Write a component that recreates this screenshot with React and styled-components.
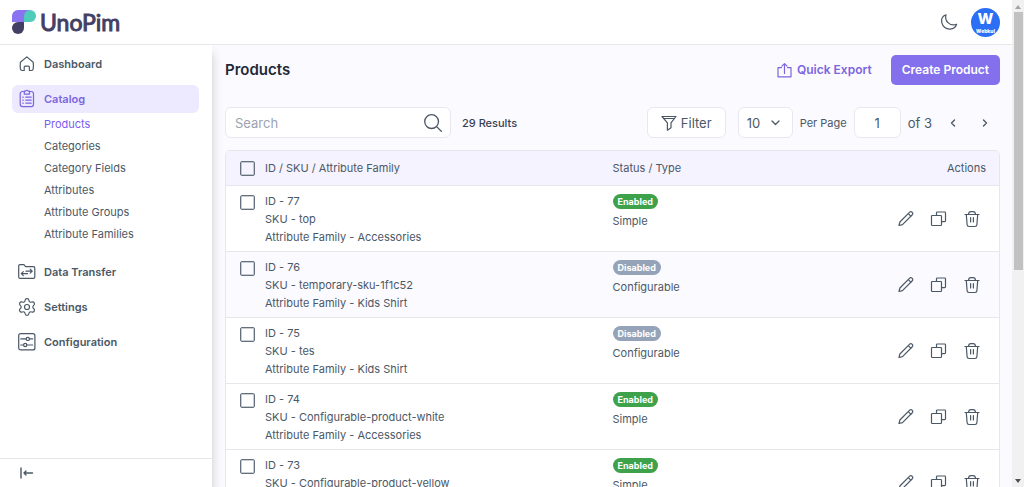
import React from 'react';
import styled, { createGlobalStyle } from 'styled-components';
import { Settings } from 'lucide-react';

const GlobalStyle = createGlobalStyle`
  * {
    box-sizing: border-box;
  }

  body {
    margin: 0;
    color: #4b5866;
    font-family: Inter, 'Liberation Sans', sans-serif;
    font-size: 11px;
    line-height: 18px;
  }

  button, input, select {
    font: inherit;
    color: inherit;
    margin: 0;
  }

  a {
    color: inherit;
    text-decoration: none;
  }

  svg {
    display: block;
    flex: none;
    overflow: visible;
  }
`;

const Shell = styled.div`
  display: flex;
  height: 100vh;
  overflow: hidden;
`;

const Page = styled.div`
  flex: 1;
  min-width: 0;
  display: flex;
  flex-direction: column;
`;

const Header = styled.header`
  flex: none;
  display: flex;
  align-items: center;
  justify-content: space-between;
  height: 45px;
  padding: 0 12px;
  background: #fff;
  border-bottom: 1px solid #e5e7eb;
`;

const Brand = styled.a`
  display: flex;
  align-items: center;
  gap: 4px;
  color: #433f64;
  font-family: Lato, sans-serif;
  font-size: 23px;
  line-height: 30px;
  -webkit-text-stroke: 1px #433f64;
`;

const HeaderTools = styled.div`
  display: flex;
  align-items: center;
  gap: 13px;
`;

const IconButton = styled.button`
  display: flex;
  align-items: center;
  justify-content: center;
  width: 18px;
  height: 18px;
  padding: 0;
  border: 0;
  background: none;
  color: #4b5866;
  cursor: pointer;
`;

const Avatar = styled.button`
  display: flex;
  flex-direction: column;
  align-items: center;
  justify-content: center;
  width: 29px;
  height: 29px;
  padding: 0;
  border: 0;
  border-radius: 50%;
  background: #2b6ff5;
  color: #fff;
  font-weight: 800;
  font-size: 15px;
  line-height: 18px;
  cursor: pointer;

  small {
    font-size: 5px;
    line-height: 6px;
  }
`;

const Body = styled.div`
  flex: 1;
  min-height: 0;
  display: flex;
  background: #fbfaff;
`;

const Sidebar = styled.aside`
  flex: none;
  display: flex;
  flex-direction: column;
  justify-content: space-between;
  width: 212px;
  background: #fff;
  box-shadow: 0 8px 10px rgba(0, 0, 0, 0.2);
  clip-path: inset(0 -12px 0 0);
`;

const Nav = styled.nav`
  display: flex;
  flex-direction: column;
  gap: 7px;
  padding: 5px 13px 0 12px;
`;

const NavItem = styled.a`
  display: flex;
  align-items: center;
  gap: 8px;
  height: 28px;
  padding: 0 6px;
  border-radius: 6px;
  font-weight: 600;
  color: ${({ $active }) => ($active ? '#7c66e0' : '#4b5866')};
  background: ${({ $active }) => ($active ? '#ede9fe' : 'transparent')};
`;

const GearIcon = styled(Settings)`
  margin: 0 -1px;
`;

const SubMenu = styled.div`
  display: flex;
  flex-direction: column;
  margin-top: -7px;
  padding: 0 0 6px 32px;
`;

const SubItem = styled.a`
  line-height: 22px;
  color: ${({ $active }) => ($active ? '#7c5cf0' : '#4b5866')};
`;

const Collapse = styled.div`
  display: flex;
  align-items: center;
  height: 29px;
  padding-left: 18px;
  border-top: 1px solid #e5e7eb;
`;

const Main = styled.main`
  flex: 1;
  min-width: 0;
  overflow: hidden;
  padding: 10px 12px 0 13px;
`;

const Row = styled.div`
  display: flex;
  align-items: center;
  gap: ${({ $gap }) => $gap}px;
`;

const TitleBar = styled(Row)`
  justify-content: space-between;
`;

const Title = styled.h1`
  margin: 0;
  color: #1f2937;
  font-size: 15px;
  font-weight: 600;
  line-height: 24px;
`;

const Button = styled.button`
  display: flex;
  align-items: center;
  gap: 5px;
  height: 30px;
  padding: 0 11px;
  border: 0;
  border-radius: 5px;
  font-size: 12px;
  font-weight: 600;
  white-space: nowrap;
  cursor: pointer;
  color: ${({ $primary }) => ($primary ? '#fff' : '#7c66e0')};
  background: ${({ $primary }) => ($primary ? '#8470ec' : 'transparent')};
`;

const Toolbar = styled(TitleBar)`
  margin: 22px 0 12px;
  padding-right: 6px;
`;

const field = `
  height: 31px;
  border: 1px solid #e9e8f0;
  border-radius: 6px;
  background: #fff;
  font-size: 13px;
`;

const SearchBox = styled.label`
  ${field}
  display: flex;
  align-items: center;
  width: 226px;
  padding: 0 8px 0 9px;

  input {
    flex: 1;
    min-width: 0;
    padding: 0;
    border: 0;
    outline: 0;
    background: none;
  }

  input::placeholder {
    color: #9ca3af;
    opacity: 1;
  }
`;

const Results = styled.p`
  margin: 0;
  font-weight: 500;
  color: #374151;
`;

const FilterButton = styled.button`
  ${field}
  display: flex;
  align-items: center;
  justify-content: center;
  gap: 4px;
  width: 79px;
  padding: 0;
  cursor: pointer;
`;

const SelectBox = styled.div`
  ${field}
  display: grid;
  align-items: center;
  width: 55px;

  select, svg {
    grid-area: 1 / 1;
  }

  select {
    appearance: none;
    width: 100%;
    height: 100%;
    padding: 0 8px;
    border: 0;
    background: none;
  }

  svg {
    justify-self: end;
    margin-right: 12px;
    pointer-events: none;
  }
`;

const PageInput = styled.input`
  ${field}
  width: 47px;
  padding: 0;
  text-align: center;
`;

const PageTotal = styled.span`
  font-size: 13px;
`;

const Table = styled.table`
  width: 100%;
  table-layout: fixed;
  border: 1px solid #e5e7eb;
  border-radius: 5px;
  border-spacing: 0;
  overflow: hidden;
  background: #fff;

  th, td {
    padding: 0;
    font-weight: 400;
    text-align: left;
    vertical-align: top;
    border-bottom: 1px solid #e5e7eb;
  }

  th {
    height: 35px;
    vertical-align: middle;
    background: #f5f3ff;
  }

  td {
    height: 66px;
    padding-top: 6px;
  }

  th:first-child, td:first-child {
    width: 50%;
    padding-left: 14px;
  }

  th:last-child {
    padding-right: 13px;
    text-align: right;
  }

  td:last-child {
    padding: 0 18px 0 0;
    vertical-align: middle;
  }
`;

const BodyRow = styled.tr`
  background: ${({ $highlight }) => ($highlight ? '#fbfaff' : '#fff')};
`;

const Entry = styled.label`
  display: flex;
  align-items: ${({ $center }) => ($center ? 'center' : 'flex-start')};
  gap: 10px;
`;

const Checkbox = styled.input.attrs({ type: 'checkbox' })`
  appearance: none;
  flex: none;
  width: 15px;
  height: 15px;
  border: 1px solid #64707e;
  border-radius: 2px;
  box-shadow: inset 0 0 0 1px rgba(100, 112, 126, 0.35);

  td & {
    margin-top: 3px;
  }

  &:checked {
    background: #8470ec;
  }
`;

const Lines = styled.span`
  display: flex;
  flex-direction: column;
  white-space: nowrap;
`;

const Badge = styled.span`
  display: block;
  width: fit-content;
  margin: 2px 0 3px;
  padding: 0 5px;
  border-radius: 8px;
  color: #fff;
  font-size: 9px;
  font-weight: 700;
  line-height: 15px;
  background: ${({ $enabled }) => ($enabled ? '#3ea24b' : '#94a3b8')};
`;

const Actions = styled.div`
  display: flex;
  justify-content: flex-end;
  gap: 15px;
`;

const Scrollbar = styled.div`
  flex: none;
  display: flex;
  flex-direction: column;
  justify-content: space-between;
  align-items: center;
  width: 12px;
  padding: 5px 0 4px;
  background: #f1f1f1;
`;

const Thumb = styled.div`
  width: 9px;
  height: 54%;
  margin: 3px 0 auto;
  background: #c1c1c1;
`;

const Icon = ({ size = 18, stroke = 1.2, children, ...rest }) => (
  <svg
    width={size}
    height={size}
    viewBox={`0 0 ${size} ${size}`}
    fill="none"
    stroke="currentColor"
    strokeWidth={stroke}
    strokeLinecap="round"
    strokeLinejoin="round"
    aria-hidden="true"
    {...rest}
  >
    {children}
  </svg>
);

const Logo = () => (
  <svg width="24" height="24" viewBox="0 0 24 24" aria-hidden="true">
    <path d="M0 12V6a6 6 0 0 1 6-6h12l-6 12z" fill="#8b72f0" />
    <path d="M12 12V6a6 6 0 1 1 6 6z" fill="#4ecbb9" />
    <path d="M12 12v6a6 6 0 1 1-6-6z" fill="#433f64" />
  </svg>
);

const HomeIcon = () => (
  <Icon>
    <path d="M2.4 7.3 8.8 1.9l6.4 5.4c.3 2.2.3 4.4 0 6.6a1.9 1.9 0 0 1-1.8 1.6h-2v-3.3a1 1 0 0 0-1-1H7.2a1 1 0 0 0-1 1v3.3h-2a1.9 1.9 0 0 1-1.8-1.6c-.3-2.2-.3-4.4 0-6.6z" />
  </Icon>
);

const CatalogIcon = () => (
  <Icon>
    <path d="M6.3 1.5H4.5a2.3 2.3 0 0 0-2.3 2.3v10.5a2.3 2.3 0 0 0 2.3 2.3h8.7a2.3 2.3 0 0 0 2.3-2.3V3.8a2.3 2.3 0 0 0-2.3-2.3h-1.8" />
    <path d="M6.3 1.2h1.3a1.3 1.3 0 0 1 2.5 0h1.4v2.9H6.3z" />
    <path d="M4.8 7.2h.5M7.8 7.2h5.4M4.8 10.2h.5M7.8 10.2h5.4M4.8 13.2h.5M7.8 13.2h5.4" />
  </Icon>
);

const TransferIcon = () => (
  <Icon>
    <path d="M.7 14V2.9a1.2 1.2 0 0 1 1.2-1.2h4l1.7 1.9h7.9a1.3 1.3 0 0 1 1.3 1.3V14a1.4 1.4 0 0 1-1.4 1.4H2.1A1.4 1.4 0 0 1 .7 14z" />
    <path d="M8 8.2h6.2M12.2 6.2l2 2-2 2M9.6 10.6H3.3M5.3 8.6l-2 2 2 2" />
  </Icon>
);

const ConfigIcon = () => (
  <Icon>
    <rect x=".7" y=".7" width="16.2" height="16.2" rx="2" />
    <path d="M2.8 5.9H8M11.6 5.9h3.1M2.8 12h2.6M9 12h5.7" />
    <circle cx="9.8" cy="5.9" r="1.6" />
    <circle cx="7.2" cy="12" r="1.6" />
  </Icon>
);

const ExportIcon = () => (
  <Icon size={15}>
    <path d="M4.5 4.6H1v9.2h13V4.6h-3.5M7.5 10.5V.8M4.9 3.2 7.5.6l2.6 2.6" />
  </Icon>
);

const EditIcon = () => (
  <Icon>
    <path d="M2 15.5l.9-3.5L12.7 2.2a1.6 1.6 0 0 1 2.3 0l.3.3a1.6 1.6 0 0 1 0 2.3L5.5 14.6zM11.3 3.6l2.7 2.7" />
  </Icon>
);

const CopyIcon = () => (
  <Icon>
    <rect x="1.5" y="5.5" width="10" height="10" rx=".8" />
    <path d="M6.5 5.5V2.8a.8.8 0 0 1 .8-.8h7.4a.8.8 0 0 1 .8.8v8a.8.8 0 0 1-.8.8h-3.2" />
  </Icon>
);

const TrashIcon = () => (
  <Icon>
    <path d="M2 4.5h14M3.3 4.5l.8 10.3A1.9 1.9 0 0 0 6 16.5h6a1.9 1.9 0 0 0 1.9-1.7l.8-10.3M5.5 4.5c.1-1.9.8-2.9 2.4-2.9h2.2c1.6 0 2.3 1 2.4 2.9M7.6 7.5V12M10.4 7.5V12" />
  </Icon>
);

const products = [
  { id: 77, sku: 'top', family: 'Accessories', enabled: true, type: 'Simple' },
  { id: 76, sku: 'temporary-sku-1f1c52', family: 'Kids Shirt', enabled: false, type: 'Configurable', highlight: true },
  { id: 75, sku: 'tes', family: 'Kids Shirt', enabled: false, type: 'Configurable' },
  { id: 74, sku: 'Configurable-product-white', family: 'Accessories', enabled: true, type: 'Simple' },
  { id: 73, sku: 'Configurable-product-yellow', family: 'Accessories', enabled: true, type: 'Simple' },
];

const catalogLinks = ['Products', 'Categories', 'Category Fields', 'Attributes', 'Attribute Groups', 'Attribute Families'];

const ProductRow = ({ product }) => (
  <BodyRow $highlight={product.highlight}>
    <td>
      <Entry>
        <Checkbox />
        <Lines>
          <span>ID - {product.id}</span>
          <span>SKU - {product.sku}</span>
          <span>Attribute Family - {product.family}</span>
        </Lines>
      </Entry>
    </td>
    <td>
      <Badge $enabled={product.enabled}>{product.enabled ? 'Enabled' : 'Disabled'}</Badge>
      {product.type}
    </td>
    <td>
      <Actions>
        <IconButton aria-label="Edit"><EditIcon /></IconButton>
        <IconButton aria-label="Copy"><CopyIcon /></IconButton>
        <IconButton aria-label="Delete"><TrashIcon /></IconButton>
      </Actions>
    </td>
  </BodyRow>
);

const App = () => (
  <Shell>
    <GlobalStyle />
    <Page>
      <Header>
        <Brand href="#"><Logo />UnoPim</Brand>
        <HeaderTools>
          <IconButton aria-label="Dark mode">
            <Icon>
              <path d="M6 1.8C2.8 3 1 6 1.8 9.7c.8 4 4.4 6.7 8.4 6.4 3-.2 5.5-2.2 6.4-4.9-2.8 1.2-6 .8-8.3-1.3C6 7.8 5.1 4.8 6 1.8z" />
            </Icon>
          </IconButton>
          <Avatar>W<small>Webkul</small></Avatar>
        </HeaderTools>
      </Header>
      <Body>
        <Sidebar>
          <Nav>
            <NavItem href="#"><HomeIcon />Dashboard</NavItem>
            <NavItem href="#" $active><CatalogIcon />Catalog</NavItem>
            <SubMenu>
              {catalogLinks.map((name, i) => (
                <SubItem key={name} href="#" $active={i === 0}>{name}</SubItem>
              ))}
            </SubMenu>
            <NavItem href="#"><TransferIcon />Data Transfer</NavItem>
            <NavItem href="#"><GearIcon size={20} strokeWidth={1.4} />Settings</NavItem>
            <NavItem href="#"><ConfigIcon />Configuration</NavItem>
          </Nav>
          <Collapse>
            <IconButton aria-label="Collapse sidebar">
              <Icon stroke={1.4}>
                <path d="M3 4v10M14.5 9H6M8 7 6 9l2 2" />
              </Icon>
            </IconButton>
          </Collapse>
        </Sidebar>
        <Main>
          <TitleBar>
            <Title>Products</Title>
            <Row $gap={8}>
              <Button><ExportIcon />Quick Export</Button>
              <Button $primary>Create Product</Button>
            </Row>
          </TitleBar>
          <Toolbar>
            <Row $gap={11}>
              <SearchBox>
                <input type="text" placeholder="Search" aria-label="Search" />
                <Icon stroke={1.3}>
                  <circle cx="7.6" cy="7.6" r="6.9" />
                  <path d="M12.6 12.6l4.7 4.7" />
                </Icon>
              </SearchBox>
              <Results>29 Results</Results>
            </Row>
            <Row $gap={12}>
              <FilterButton>
                <Icon size={16}>
                  <path d="M1 1.5h14l-5 6.3v5l-3.6 2.4V7.8zM2.5 3.5h11" />
                </Icon>
                Filter
              </FilterButton>
              <Row $gap={7}>
                <SelectBox>
                  <select id="per-page" defaultValue="10">
                    <option>10</option>
                    <option>20</option>
                    <option>50</option>
                  </select>
                  <Icon size={9} stroke={1.3}>
                    <path d="M1 3l3.5 3.5L8 3" />
                  </Icon>
                </SelectBox>
                <label htmlFor="per-page">Per Page</label>
                <PageInput type="text" defaultValue="1" aria-label="Page" />
                <PageTotal>of 3</PageTotal>
              </Row>
              <Row $gap={14}>
                <IconButton aria-label="Previous page">
                  <Icon stroke={1.4}><path d="M10.5 6l-3 3 3 3" /></Icon>
                </IconButton>
                <IconButton aria-label="Next page">
                  <Icon stroke={1.4}><path d="M7.5 6l3 3-3 3" /></Icon>
                </IconButton>
              </Row>
            </Row>
          </Toolbar>
          <Table>
            <thead>
              <tr>
                <th>
                  <Entry $center><Checkbox />ID / SKU / Attribute Family</Entry>
                </th>
                <th>Status / Type</th>
                <th>Actions</th>
              </tr>
            </thead>
            <tbody>
              {products.map((product) => <ProductRow key={product.id} product={product} />)}
            </tbody>
          </Table>
        </Main>
      </Body>
    </Page>
    <Scrollbar aria-hidden="true">
      <svg width="6" height="4" viewBox="0 0 6 4"><path d="M0 4l3-4 3 4z" fill="#a3a3a3" /></svg>
      <Thumb />
      <svg width="6" height="4" viewBox="0 0 6 4"><path d="M0 0l3 4 3-4z" fill="#505050" /></svg>
    </Scrollbar>
  </Shell>
);

export default App;
